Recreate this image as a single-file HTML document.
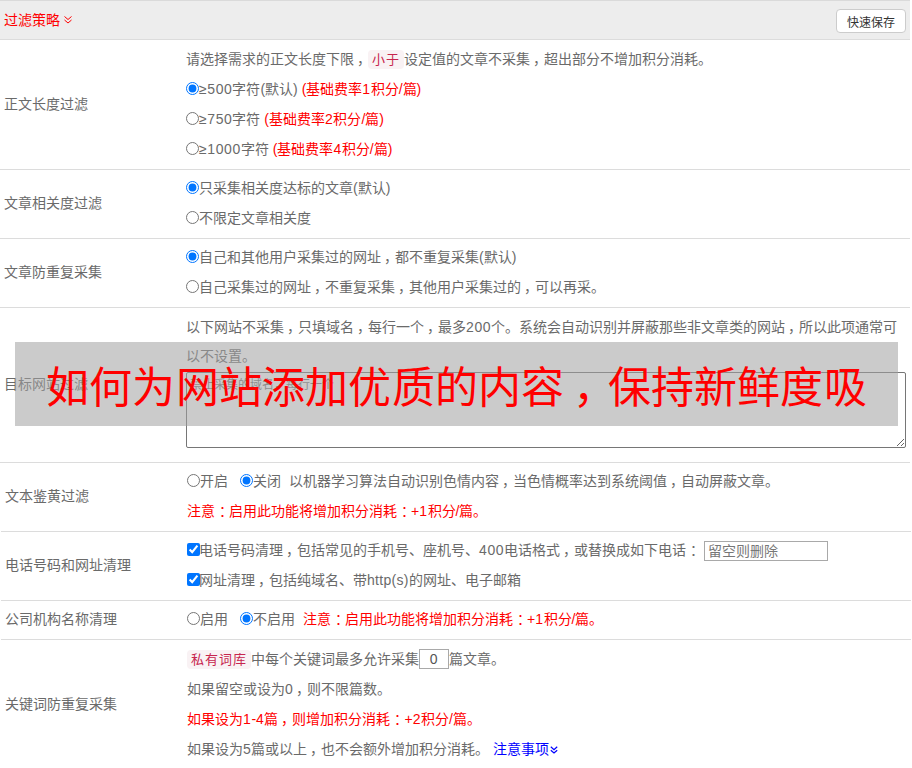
<!DOCTYPE html>
<html lang="zh-CN">
<head>
<meta charset="utf-8">
<style>
*{box-sizing:border-box}
html,body{margin:0;padding:0;background:#fff}
body{width:912px;height:768px;overflow:hidden;position:relative;font-family:"Liberation Sans",sans-serif;font-size:14px;color:#6a6a6a}
.hd{position:absolute;left:0;top:0;width:910px;height:40px;background:#ededed;border-top:1px solid #dadada;border-bottom:1px solid #dcdcdc}
.hd .t{position:absolute;left:4px;top:9px;line-height:20px;color:#f00}
.btn{position:absolute;left:836px;top:8px;width:70px;height:24px;background:#fff;border:1px solid #ccc;border-radius:4px;font-size:12px;color:#333;text-align:center;line-height:22px;padding-top:2px}
.row{position:absolute;left:0;width:910px;border-bottom:1px solid #dcdcdc}
.lb{position:absolute;left:4px;line-height:20px}
.ln{position:absolute;left:186px;line-height:20px;white-space:nowrap}
.red{color:#f00}
.tag{display:inline-block;vertical-align:top;margin-top:1px;height:19px;line-height:19px;background:#f9f2f4;color:#c7254e;padding:0 4px 0 4px;letter-spacing:1px;border-radius:4px;font-size:13px}
input[type=radio],input[type=checkbox]{margin:0;width:13px;height:13px;vertical-align:-1px}
input[type=checkbox]{margin:0 -1px 0 0}
.ta{position:absolute;left:186px;top:64px;width:720px;height:76px;border:1px solid #767676;border-radius:2px;padding:3px 3px;margin:0;font-family:"Liberation Sans",sans-serif;font-size:12px;line-height:18px;background:transparent;resize:both}
.ta::placeholder{color:#777}
.inp{display:inline-block;vertical-align:middle;border:1px solid #a9a9a9;height:20px;line-height:18px;padding:0 3px;color:#777}
.ov{position:absolute;left:15px;top:342px;width:883px;height:84px;background:rgba(160,160,160,0.55)}
.ov span{position:absolute;left:31px;top:21px;font-size:43px;letter-spacing:.2px;line-height:50px;color:#f00;white-space:nowrap}
.cm,.cl{font-style:normal;position:relative}
.cm{left:.21em}.cl{left:.28em}
b.d,b.h{font-weight:normal}
b.d{letter-spacing:.6px}
b.h{letter-spacing:.3px}
</style>
</head>
<body>
<div class="hd"><span class="t">过滤策略</span><svg style="position:absolute;left:63px;top:13px" width="10" height="10" viewBox="0 0 10 10"><path d="M1.5 2.5 L5 5.5 L8.5 2.5 M1.5 6 L5 9 L8.5 6" fill="none" stroke="#f00" stroke-width="1"/></svg><div class="btn">快速保存</div></div>

<div class="row" style="top:40px;height:130px">
  <div class="lb" style="top:54px">正文长度过滤</div>
  <div class="ln" style="top:9px">请选择需求的正文长度下限<i class="cm">，</i><span class="tag">小于</span>设定值的文章不采集<i class="cm">，</i>超出部分不增加积分消耗。</div>
  <div class="ln" style="top:39px"><input type="radio" checked><b class="d">≥500</b>字符(默认) <span class="red">(基础费率<b class="d">1</b>积分/篇)</span></div>
  <div class="ln" style="top:69px"><input type="radio"><b class="d">≥750</b>字符 <span class="red">(基础费率<b class="d">2</b>积分/篇)</span></div>
  <div class="ln" style="top:99px"><input type="radio"><b class="d">≥1000</b>字符 <span class="red">(基础费率<b class="d">4</b>积分/篇)</span></div>
</div>

<div class="row" style="top:170px;height:69px">
  <div class="lb" style="top:23px">文章相关度过滤</div>
  <div class="ln" style="top:8px"><input type="radio" checked>只采集相关度达标的文章(默认)</div>
  <div class="ln" style="top:38px"><input type="radio">不限定文章相关度</div>
</div>

<div class="row" style="top:239px;height:69px">
  <div class="lb" style="top:23px">文章防重复采集</div>
  <div class="ln" style="top:8px"><input type="radio" checked>自己和其他用户采集过的网址<i class="cm">，</i>都不重复采集(默认)</div>
  <div class="ln" style="top:38px"><input type="radio">自己采集过的网址<i class="cm">，</i>不重复采集<i class="cm">，</i>其他用户采集过的<i class="cm">，</i>可以再采。</div>
</div>

<div class="row" style="top:308px;height:155px">
  <div class="lb" style="top:66px">目标网站过滤</div>
  <div class="ln" style="top:9px">以下网站不采集<i class="cm">，</i>只填域名<i class="cm">，</i>每行一个<i class="cm">，</i>最多<b class="d">200</b>个。系统会自动识别并屏蔽那些非文章类的网站<i class="cm">，</i>所以此项通常可</div>
  <div class="ln" style="top:38px">以不设置。</div>
  <textarea class="ta" placeholder="禁止采集的域名，每行一个"></textarea>
</div>

<div class="row" style="left:1px;top:463px;height:69px">
  <div class="lb" style="top:23px">文本鉴黄过滤</div>
  <div class="ln" style="top:8px"><input type="radio">开启<input type="radio" checked style="margin-left:12px">关闭<span style="margin-left:8px">以机器</span>学习算法自动识别色情内容<i class="cm">，</i>当色情概率达到系统阈值<i class="cm">，</i>自动屏蔽文章。</div>
  <div class="ln red" style="top:38px">注意<i class="cl">：</i>启用此功能将增加积分消耗<i class="cl">：</i>+<b class="d">1</b>积分/篇。</div>
</div>

<div class="row" style="left:1px;top:532px;height:69px">
  <div class="lb" style="top:23px">电话号码和网址清理</div>
  <div class="ln" style="top:8px"><input type="checkbox" checked>电话号码清理<i class="cm">，</i>包括常见的手机号、座机号、<b class="d">400</b>电话格式<i class="cm">，</i>或替换成如下电话<i class="cl">：</i> <span class="inp" style="width:124px">留空则删除</span></div>
  <div class="ln" style="top:38px"><input type="checkbox" checked>网址清理<i class="cm">，</i>包括纯域名、带<b class="h">http(s)</b>的网址、电子邮箱</div>
</div>

<div class="row" style="left:1px;top:601px;height:39px">
  <div class="lb" style="top:8px">公司机构名称清理</div>
  <div class="ln" style="top:8px"><input type="radio">启用<input type="radio" checked style="margin-left:12px">不启用<span class="red" style="margin-left:8px">注意<i class="cl">：</i>启用此功能将增加积分消耗<i class="cl">：</i>+<b class="d">1</b>积分/篇。</span></div>
</div>

<div class="row" style="left:1px;top:640px;height:140px;border-bottom:0">
  <div class="lb" style="top:54px">关键词防重复采集</div>
  <div class="ln" style="top:9px"><span class="tag">私有词库</span>中每个关键词最多允许采集<span class="inp" style="width:30px;text-align:center;color:#555;position:relative;top:-1px"><b class="d">0</b></span>篇文章。</div>
  <div class="ln" style="top:39px">如果留空或设为<b class="d">0</b><i class="cm">，</i>则不限篇数。</div>
  <div class="ln red" style="top:69px">如果设为<b class="d">1</b>-<b class="d">4</b>篇<i class="cm">，</i>则增加积分消耗<i class="cl">：</i>+<b class="d">2</b>积分/篇。</div>
  <div class="ln" style="top:99px">如果设为<b class="d">5</b>篇或以上<i class="cm">，</i>也不会额外增加积分消耗。 <span style="color:#00f">注意事项</span><svg style="vertical-align:0px;margin-left:0.7px" width="8" height="8" viewBox="0 0 8 8"><path d="M0.8 0.8 L4 3.6 L7.2 0.8 M0.8 4.2 L4 7 L7.2 4.2" fill="none" stroke="#00f" stroke-width="1.2"/></svg></div>
</div>

<div class="ov"><span>如何为网站添加优质的内容<i class="cm">，</i>保持新鲜度吸</span></div>
</body>
</html>
